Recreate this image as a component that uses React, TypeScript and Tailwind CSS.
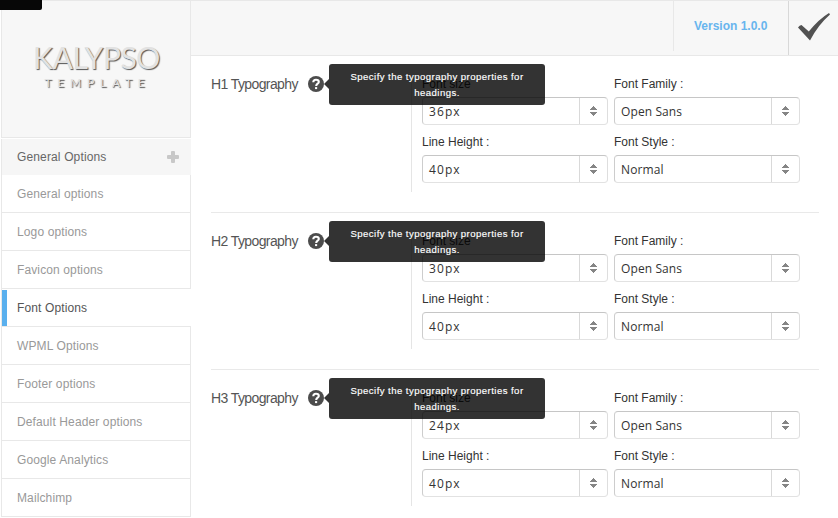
const menu = [
  "General options",
  "Logo options",
  "Favicon options",
  "Font Options",
  "WPML Options",
  "Footer options",
  "Default Header options",
  "Google Analytics",
  "Mailchimp",
];

const sections = [
  { title: "H1 Typography", size: "36px" },
  { title: "H2 Typography", size: "30px" },
  { title: "H3 Typography", size: "24px" },
];

function Select({ label, value, numeric }: { label: string; value: string; numeric?: boolean }) {
  return (
    <div className="w-[186px]">
      <div className="mb-1 h-[17px] text-[12px] leading-[17px] text-[#333]">{label}</div>
      <div className="flex h-7 rounded-[4px] border border-t-[#c6c6c6] border-r-[#dedede] border-b-[#e2e2e2] border-l-[#cdcdcd] bg-white">
        <div
          className={`flex-1 pt-px pl-[6px] font-['Open_Sans','Noto_Sans',sans-serif] text-[12px] leading-[26px] text-[#333] ${
            numeric ? "tracking-[1.1px]" : "tracking-[0.1px]"
          }`}
        >
          {value}
        </div>
        <div className="flex w-7 items-center justify-center border-l border-[#d9d9d9]">
          <svg width="7" height="10" viewBox="0 0 7 10" fill="#858585" shapeRendering="crispEdges">
            <path d="M3 0h1v1h1v1h1v1h1v1H0V3h1V2h1V1h1zM0 6h7v1H6v1H5v1H4v1H3V9H2V8H1V7H0z" />
          </svg>
        </div>
      </div>
    </div>
  );
}

function Section({ title, size }: { title: string; size: string }) {
  return (
    <section className="flex h-[157px] shrink-0 border-b border-[#e9e9e9] pt-5">
      <div className="flex h-4 w-[200px] items-center">
        <h2 className="w-[97px] text-[14px] leading-4 tracking-[-0.6px] whitespace-nowrap text-[#555]">{title}</h2>
        <div className="relative flex size-4 items-center justify-center rounded-full bg-[#4c4c4c]">
          <svg width="16" height="16" viewBox="0 0 16 16" fill="none" stroke="#fff" strokeWidth="2.1">
            <path d="M5.3 6.2C5.3 4.5 6.4 3.7 8 3.7s2.8.9 2.8 2.2c0 1.8-2.6 1.8-2.6 4" />
            <path d="M8.1 11.1v2" />
          </svg>
          <div className="absolute -top-3 left-[21px] z-10 h-[41px] w-[216px] rounded-[3px] bg-black/80 px-4 pt-[5px] text-center text-white">
            <div className="text-[9.6px] leading-4 tracking-[0.44px] [-webkit-text-stroke:0.15px_white]">
              Specify the typography properties for headings.
            </div>
            <span className="absolute top-[15px] -left-[5px] border-y-[5px] border-r-[5px] border-y-transparent border-r-black/80" />
          </div>
        </div>
      </div>
      <div className="grid h-[116px] grid-cols-[186px_186px] content-start gap-x-[6px] gap-y-[9px] border-l border-[#e5e5e5] pl-[10px]">
        <Select label="Font size" value={size} numeric />
        <Select label="Font Family :" value="Open Sans" />
        <Select label="Line Height :" value="40px" numeric />
        <Select label="Font Style :" value="Normal" />
      </div>
    </section>
  );
}

export default function App() {
  return (
    <div className="relative flex h-[518px] w-[838px] overflow-hidden bg-white font-['Liberation_Sans',Arial,sans-serif]">
      <div className="absolute top-0 left-0 z-20 h-[10px] w-[42px] rounded-br-[2px] bg-[#070707]" />
      <aside className="ml-px flex w-[190px] shrink-0 flex-col">
        <div className="flex h-[138px] shrink-0 flex-col items-center border border-[#e8e8e8] bg-[#f7f7f7] pt-[38px] font-[Lato,sans-serif] text-[#e2e2e2]">
          <div className="h-[37px] pl-px text-[30px] leading-[36px] tracking-[-0.4px] [text-shadow:1px_1px_1px_#555]">
            KALYPSO
          </div>
          <div className="pl-[3px] text-[12px] leading-[14px] tracking-[5.8px] [text-shadow:1px_1px_1px_#555]">
            TEMPLATE
          </div>
        </div>
        <div className="mt-px flex h-9 shrink-0 items-center justify-between border-x border-l-[#e8e8e8] border-r-[#f6f6f6] bg-[#f6f6f6] pr-[11px] pl-[15px] text-[12px] tracking-[0.14px] text-[#666]">
          General Options
          <svg width="12" height="12" viewBox="0 0 12 12" fill="#c8c8c8">
            <path d="M5 0h2q1 0 1 1v3h3q1 0 1 1v2q0 1-1 1H8v3q0 1-1 1H5q-1 0-1-1V8H1q-1 0-1-1V5q0-1 1-1h3V1q0-1 1-1" />
          </svg>
        </div>
        <nav className="flex flex-col text-[12px] tracking-[0.12px]">
          {menu.map((item) => {
            const active = item === "Font Options";
            return (
              <div
                key={item}
                className={`flex h-[38px] shrink-0 border-b border-l border-[#e8e8e8] ${
                  active ? "text-[#555]" : "border-r text-[#999]"
                }`}
              >
                <span className={active ? "mt-px h-9 w-[5px] bg-[#5ab0ee]" : "w-[5px]"} />
                <span className="pl-[10px] leading-[39px]">{item}</span>
              </div>
            );
          })}
        </nav>
      </aside>
      <div className="flex min-w-0 flex-1 flex-col">
        <header className="flex h-14 shrink-0 justify-end border-y border-[#e8e8e8] bg-[#f7f7f7]">
          <div className="h-[50px] w-[115px] border-l border-[#e8e8e8] pl-5 text-[12px] leading-[50px] font-bold text-[#68b5ee]">
            Version 1.0.0
          </div>
          <div className="w-[50px] border-l border-[#d8d8d8] pt-3 pl-[9px]">
            <svg width="33" height="28" viewBox="0 0 33 28" fill="#525252">
              <path d="M0 14.5Q1.5 12 3.5 12L10.8 18.5Q21 6 31 0l1 1.5Q20 12 12 27.5z" />
            </svg>
          </div>
        </header>
        <main className="flex w-[628px] flex-col pl-5">
          {sections.map((s) => (
            <Section key={s.title} {...s} />
          ))}
        </main>
      </div>
    </div>
  );
}
